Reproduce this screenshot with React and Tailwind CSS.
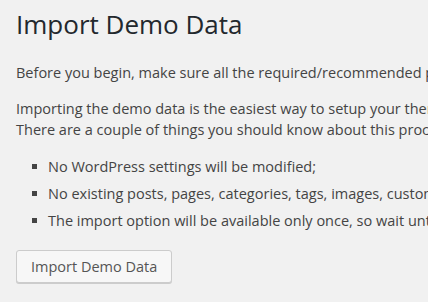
import React from 'react';

const items = [
  'No WordPress settings will be modified;',
  'No existing posts, pages, categories, tags, images, custom post types or any other data will be deleted or modified;',
  'The import option will be available only once, so wait until the process is complete.',
];

export default function App() {
  return (
    <div className="w-[428px] h-[302px] overflow-hidden bg-[#f1f1f1] text-[#444] font-['Open_Sans',sans-serif]">
      <div className="pl-4 pt-[7px] pr-4">
        <h1 className="text-[26px] leading-[34px] font-normal text-[#23282d]">Import Demo Data</h1>
        <p className="mt-[21px] text-[14.5px] leading-[21px] whitespace-nowrap">
          Before you begin, make sure all the required/recommended plugins are installed and activated.
        </p>
        <p className="mt-[15px] text-[14.5px] leading-[21px] whitespace-nowrap">
          Importing the demo data is the easiest way to setup your theme and make it look like the demo.
          <br />
          There are a couple of things you should know about this process:
        </p>
        <ul className="mt-[16px] text-[14.5px] leading-[21px] whitespace-nowrap">
          {items.map((t) => (
            <li key={t} className="mb-[6px] flex items-center">
              <span className="ml-4 mr-[11px] w-[5px] h-[5px] shrink-0 bg-[#444]" />
              <span>{t}</span>
            </li>
          ))}
        </ul>
        <button className="mt-[13px] h-[33px] px-[14px] text-[14.5px] text-[#555] bg-[#f7f7f7] border border-[#ccc] rounded-[3px] shadow-[0_1px_0_#ccc]">
          Import Demo Data
        </button>
      </div>
    </div>
  );
}
